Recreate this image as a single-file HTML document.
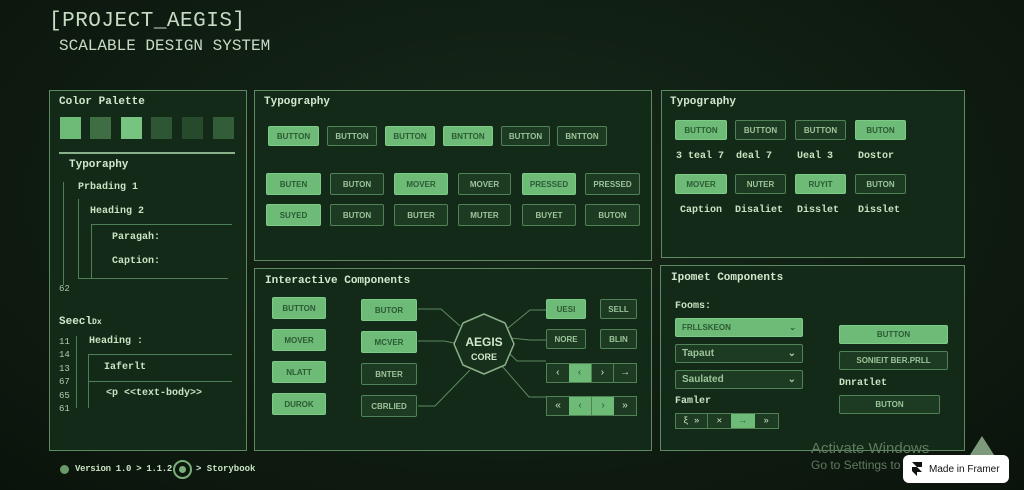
<!DOCTYPE html><html><head><style>
*{margin:0;padding:0;box-sizing:border-box}
body{width:1024px;height:490px;overflow:hidden;background:radial-gradient(ellipse at 50% 40%,#16291a 0%,#0e1a10 70%,#0a130b 100%);font-family:"Liberation Mono","DejaVu Sans Mono",monospace;color:#c9e3c2;position:relative}
.a{position:absolute}
.p{position:absolute;border:1.5px solid #5d8a60;background:#142a18}
.t{position:absolute;font-size:11px;font-weight:bold;color:#d2e8cc}
.b{position:absolute;height:20px;font-size:8px;display:flex;align-items:center;justify-content:center;border-radius:2px;font-weight:bold;font-family:"Liberation Sans",sans-serif}
.l{background:#6dbb77;color:#2c5a34;border:1px solid #7ccb86}
.d{background:#1d3a22;color:#9cc59a;border:1px solid #4f8255}
.sm{font-size:10px;font-weight:bold;color:#c9e3c2}
.ln{position:absolute;background:#4f7f55}
.pg{position:absolute;border:1px solid #4f8255;display:flex;font-size:10px;color:#c9e3c2}
.pg div{flex:1;display:flex;align-items:center;justify-content:center;background:#1d3a22}
.pg div.on{background:#6dbb77;color:#2c5a34}
</style></head><body>
<div class="a" style="left:49px;top:10px;font-size:21px;color:#c8dcc4;letter-spacing:0.5px">[PROJECT_AEGIS]</div>
<div class="a" style="left:59px;top:37px;font-size:16px;color:#c8dcc4">SCALABLE DESIGN SYSTEM</div>

<div class="p" style="left:49px;top:90px;width:198px;height:361px"></div>
<div class="t" style="left:59px;top:96px">Color Palette</div>
<div class="a" style="left:60px;top:117px;width:21px;height:22px;background:#6dbb77"></div>
<div class="a" style="left:90px;top:117px;width:21px;height:22px;background:#3f6e45"></div>
<div class="a" style="left:121px;top:117px;width:21px;height:22px;background:#76c480"></div>
<div class="a" style="left:151px;top:117px;width:21px;height:22px;background:#2f5634"></div>
<div class="a" style="left:182px;top:117px;width:21px;height:22px;background:#264a2b"></div>
<div class="a" style="left:213px;top:117px;width:21px;height:22px;background:#335c39"></div>
<div class="ln" style="left:59px;top:152px;width:176px;height:1.5px;background:#8ab08a"></div>
<div class="t" style="left:69px;top:159px">Typoraphy</div>
<div class="ln" style="left:63px;top:182px;width:1px;height:103px"></div>
<div class="sm a" style="left:78px;top:182px">Prbading 1</div>
<div class="ln" style="left:78px;top:199px;width:1px;height:80px"></div>
<div class="sm a" style="left:90px;top:206px">Heading 2</div>
<div class="ln" style="left:91px;top:224px;width:141px;height:1px"></div>
<div class="ln" style="left:91px;top:224px;width:1px;height:55px"></div>
<div class="ln" style="left:78px;top:278px;width:150px;height:1px"></div>
<div class="sm a" style="left:112px;top:232px">Paragah:</div>
<div class="sm a" style="left:112px;top:256px">Caption:</div>
<div class="a" style="left:59px;top:284px;font-size:9px;color:#a8c8a4">62</div>
<div class="t" style="left:59px;top:316px">Seecl<span style="font-size:8px">Dx</span></div>
<div class="a" style="left:59px;top:336px;font-size:9px;line-height:13.4px;color:#b0d0ac">11<br>14<br>13<br>67<br>65<br>61</div>
<div class="ln" style="left:76px;top:336px;width:1px;height:72px"></div>
<div class="sm a" style="left:89px;top:336px">Heading :</div>
<div class="ln" style="left:88px;top:354px;width:144px;height:1px"></div>
<div class="ln" style="left:88px;top:354px;width:1px;height:54px"></div>
<div class="sm a" style="left:104px;top:362px">Iaferlt</div>
<div class="ln" style="left:88px;top:381px;width:144px;height:1px"></div>
<div class="sm a" style="left:106px;top:388px">&lt;p &lt;&lt;text-body&gt;&gt;</div>

<div class="p" style="left:254px;top:90px;width:398px;height:171px"></div>
<div class="t" style="left:264px;top:96px">Typography</div>
<div class="b l" style="left:268px;top:126px;width:51px">BUTTON</div>
<div class="b d" style="left:327px;top:126px;width:50px">BUTTON</div>
<div class="b l" style="left:385px;top:126px;width:50px">BUTTON</div>
<div class="b l" style="left:443px;top:126px;width:50px">BNTTON</div>
<div class="b d" style="left:501px;top:126px;width:49px">BUTTON</div>
<div class="b d" style="left:557px;top:126px;width:50px">BNTTON</div>
<div class="b l" style="left:266px;top:173px;width:55px;height:22px">BUTEN</div>
<div class="b d" style="left:330px;top:173px;width:54px;height:22px">BUTON</div>
<div class="b l" style="left:394px;top:173px;width:54px;height:22px">MOVER</div>
<div class="b d" style="left:458px;top:173px;width:53px;height:22px">MOVER</div>
<div class="b l" style="left:522px;top:173px;width:54px;height:22px">PRESSED</div>
<div class="b d" style="left:585px;top:173px;width:55px;height:22px">PRESSED</div>
<div class="b l" style="left:266px;top:204px;width:55px;height:22px">SUYED</div>
<div class="b d" style="left:330px;top:204px;width:54px;height:22px">BUTON</div>
<div class="b d" style="left:394px;top:204px;width:54px;height:22px">BUTER</div>
<div class="b d" style="left:458px;top:204px;width:53px;height:22px">MUTER</div>
<div class="b d" style="left:522px;top:204px;width:54px;height:22px">BUYET</div>
<div class="b d" style="left:585px;top:204px;width:55px;height:22px">BUTON</div>

<div class="p" style="left:661px;top:90px;width:304px;height:168px"></div>
<div class="t" style="left:670px;top:96px">Typography</div>
<div class="b l" style="left:675px;top:120px;width:52px">BUTTON</div>
<div class="b d" style="left:735px;top:120px;width:51px">BUTTON</div>
<div class="b d" style="left:795px;top:120px;width:51px">BUTTON</div>
<div class="b l" style="left:855px;top:120px;width:51px">BUTON</div>
<div class="sm a" style="left:676px;top:151px">3 teal 7</div>
<div class="sm a" style="left:736px;top:151px">deal 7</div>
<div class="sm a" style="left:797px;top:151px">Ueal 3</div>
<div class="sm a" style="left:858px;top:151px">Dostor</div>
<div class="b l" style="left:675px;top:174px;width:52px">MOVER</div>
<div class="b d" style="left:735px;top:174px;width:51px">NUTER</div>
<div class="b l" style="left:795px;top:174px;width:51px">RUYIT</div>
<div class="b d" style="left:855px;top:174px;width:51px">BUTON</div>
<div class="sm a" style="left:680px;top:205px">Caption</div>
<div class="sm a" style="left:735px;top:205px">Disaliet</div>
<div class="sm a" style="left:797px;top:205px">Disslet</div>
<div class="sm a" style="left:858px;top:205px">Disslet</div>

<div class="p" style="left:254px;top:268px;width:398px;height:183px"></div>
<div class="t" style="left:265px;top:275px">Interactive Components</div>
<div class="b l" style="left:272px;top:297px;width:54px;height:22px">BUTTON</div>
<div class="b l" style="left:272px;top:329px;width:54px;height:22px">MOVER</div>
<div class="b l" style="left:272px;top:361px;width:54px;height:22px">NLATT</div>
<div class="b l" style="left:272px;top:393px;width:54px;height:22px">DUROK</div>
<div class="b l" style="left:361px;top:299px;width:56px;height:22px">BUTOR</div>
<div class="b l" style="left:361px;top:331px;width:56px;height:22px">MCVER</div>
<div class="b d" style="left:361px;top:363px;width:56px;height:22px">BNTER</div>
<div class="b d" style="left:361px;top:395px;width:56px;height:22px">CBRLIED</div>
<svg class="a" style="left:254px;top:268px" width="398" height="183">
<g stroke="#5d8a60" fill="none" stroke-width="1">
<path d="M164 41 H187 L206 58"/><path d="M164 73 H190 L200 75"/><path d="M164 138 H181 L216 102"/>
<path d="M254 60 L276 42 H292"/><path d="M256 70 L276 72 H292"/><path d="M254 84 L263 93 H292"/><path d="M248 98 L275 129 H292"/>
<polygon points="230,46 251,55 260,76 251,97 230,106 209,97 200,76 209,55" stroke="#8ab08a" stroke-width="1.5" fill="#16301b"/>
</g>
<text x="230" y="78" text-anchor="middle" fill="#d2e8cc" font-size="12" font-weight="bold" font-family="Liberation Sans">AEGIS</text>
<text x="230" y="92" text-anchor="middle" fill="#d2e8cc" font-size="9" font-weight="bold" font-family="Liberation Sans">CORE</text>
</svg>
<div class="b l" style="left:546px;top:299px;width:40px;height:20px">UESI</div>
<div class="b d" style="left:600px;top:299px;width:37px;height:20px">SELL</div>
<div class="b d" style="left:546px;top:329px;width:40px;height:20px">NORE</div>
<div class="b d" style="left:600px;top:329px;width:37px;height:20px">BLIN</div>
<div class="pg" style="left:546px;top:363px;width:91px;height:20px"><div>‹</div><div class="on">‹</div><div style="border-left:1px solid #4f8255">›</div><div style="border-left:1px solid #4f8255">→</div></div>
<div class="pg" style="left:546px;top:396px;width:91px;height:20px"><div>«</div><div class="on">‹</div><div class="on" style="border-left:1px solid #4f8255">›</div><div>»</div></div>

<div class="p" style="left:660px;top:265px;width:305px;height:186px"></div>
<div class="t" style="left:671px;top:272px">Ipomet Components</div>
<div class="sm a" style="left:675px;top:301px">Fooms:</div>
<div class="b l" style="left:675px;top:318px;width:128px;height:19px;justify-content:space-between;padding:0 6px">FRLLSKEON<span>⌄</span></div>
<div class="b d" style="left:675px;top:344px;width:128px;height:19px;justify-content:space-between;padding:0 6px;font-size:10px">Tapaut<span>⌄</span></div>
<div class="b d" style="left:675px;top:370px;width:128px;height:19px;justify-content:space-between;padding:0 6px;font-size:10px">Saulated<span>⌄</span></div>
<div class="sm a" style="left:675px;top:396px">Famler</div>
<div class="pg" style="left:675px;top:413px;width:104px;height:16px;font-size:9px"><div style="flex:1.3">ξ »</div><div style="border-left:1px solid #4f8255">✕</div><div class="on">→</div><div>»</div></div>
<div class="b l" style="left:839px;top:325px;width:109px;height:19px">BUTTON</div>
<div class="b d" style="left:839px;top:351px;width:109px;height:19px">SONIEIT BER.PRLL</div>
<div class="sm a" style="left:839px;top:378px">Dnratlet</div>
<div class="b d" style="left:839px;top:395px;width:101px;height:19px">BUTON</div>

<div class="a" style="left:60px;top:465px;width:9px;height:9px;border-radius:50%;background:#6a9a6a"></div>
<div class="a" style="left:75px;top:464px;font-size:9px;font-weight:bold;letter-spacing:-0.3px">Version 1.0 &gt; 1.1.2</div>
<div class="a" style="left:173px;top:460px;width:19px;height:19px;border-radius:50%;border:2px solid #7ab07a"><div style="margin:4px;width:7px;height:7px;border-radius:50%;background:#7ab07a"></div></div>
<div class="a" style="left:196px;top:464px;font-size:9px;font-weight:bold">&gt; Storybook</div>

<div class="a" style="left:811px;top:440px;font-family:'Liberation Sans',sans-serif;font-size:15px;color:#5f7a5e">Activate Windows</div>
<div class="a" style="left:811px;top:458px;font-family:'Liberation Sans',sans-serif;font-size:12px;color:#5f7a5e">Go to Settings to</div>
<div class="a" style="left:968px;top:436px;width:0;height:0;border-left:14px solid transparent;border-right:14px solid transparent;border-bottom:22px solid #7d9a7c"></div>
<div class="a" style="left:903px;top:455px;width:106px;height:28px;background:#fff;border-radius:6px;display:flex;align-items:center;font-family:'Liberation Sans',sans-serif;font-size:10px;color:#111">
<svg width="12" height="14" style="margin:0 6px 0 8px" viewBox="0 0 12 14"><path d="M1 0H11V5H6ZM1 5H6L11 10H6V14L1 9Z" fill="#111"/></svg>Made in Framer</div>
</body></html>
